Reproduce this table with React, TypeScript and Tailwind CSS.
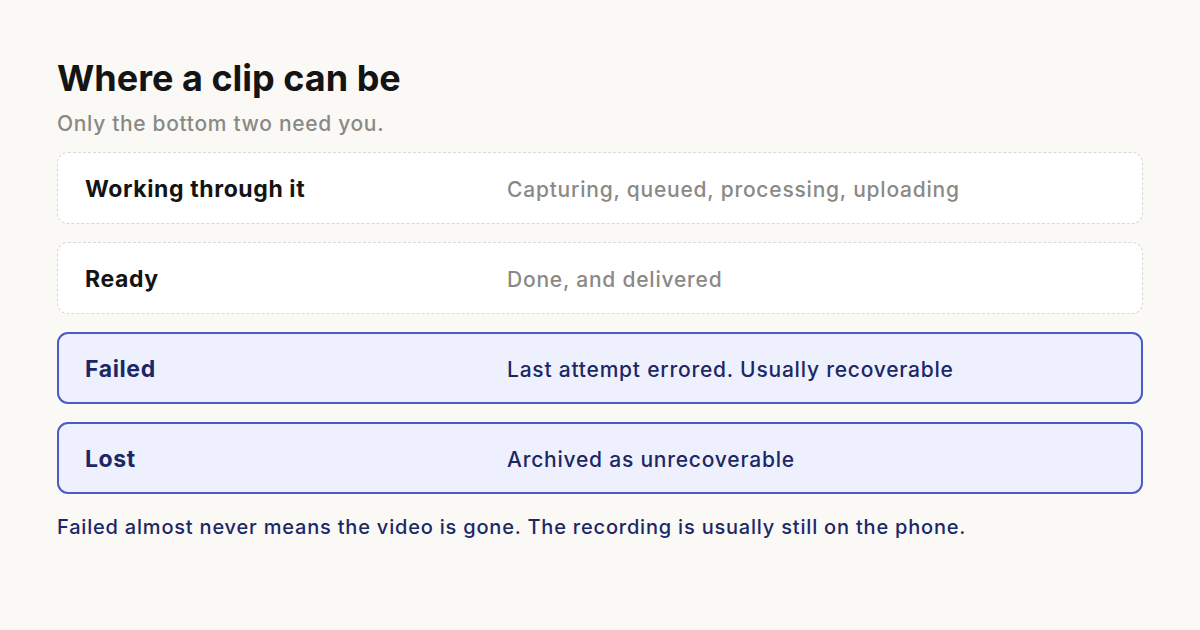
const rows = [
  { label: 'Working through it', desc: 'Capturing, queued, processing, uploading', alert: false },
  { label: 'Ready', desc: 'Done, and delivered', alert: false },
  { label: 'Failed', desc: 'Last attempt errored. Usually recoverable', alert: true },
  { label: 'Lost', desc: 'Archived as unrecoverable', alert: true },
];

export default function App() {
  return (
    <div
      className="h-[630px] w-[1200px] bg-[#faf9f6] px-[57px] pt-[55px]"
      style={{ fontFamily: 'Inter, "Noto Sans", sans-serif' }}
    >
      <h1 className="text-[36px] font-bold leading-[46px] text-[#141414]">Where a clip can be</h1>
      <p className="mt-[9px] text-[21px] font-medium leading-[28px] tracking-[0.67px] text-[#8a8985]">
        Only the bottom two need you.
      </p>

      <div className="mt-[14px] flex flex-col gap-[18px]">
        {rows.map((row) => (
          <div
            key={row.label}
            className={
              row.alert
                ? 'flex h-[72px] items-center rounded-[11px] border-2 border-[#4a5bc6] bg-[#eef1fd] px-[26px] pt-[3px]'
                : 'flex h-[72px] items-center rounded-[11px] border border-dashed border-[#d9d8d3] bg-white px-[27px] pt-[3px]'
            }
          >
            <span
              className={
                row.alert
                  ? 'w-[422px] text-[23px] font-bold tracking-[0.6px] text-[#1c2766]'
                  : 'w-[422px] text-[23px] font-bold tracking-[0.6px] text-[#141414]'
              }
            >
              {row.label}
            </span>
            <span
              className={
                row.alert
                  ? 'text-[21px] font-medium tracking-[0.78px] text-[#1c2766]'
                  : 'text-[21px] font-medium tracking-[0.78px] text-[#8a8985]'
              }
            >
              {row.desc}
            </span>
          </div>
        ))}
      </div>

      <p className="mt-[19px] text-[20px] font-medium leading-[28px] tracking-[0.8px] text-[#1c2766]">
        Failed almost never means the video is gone. The recording is usually still on the phone.
      </p>
    </div>
  );
}
